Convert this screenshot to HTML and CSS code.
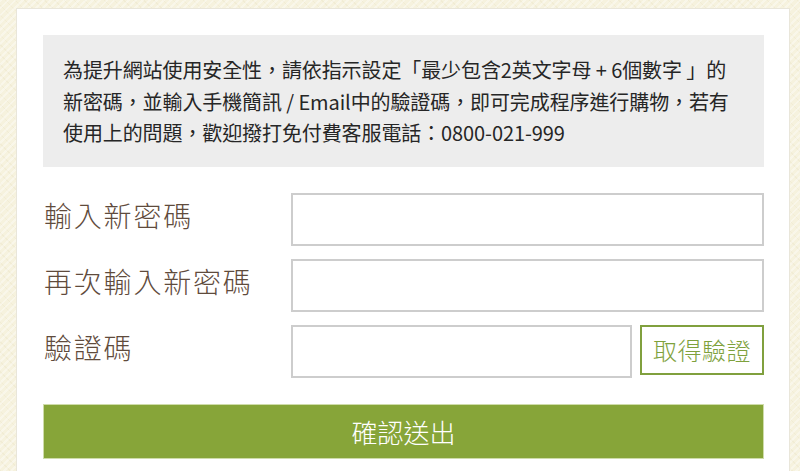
FILE: index.html
```html
<!DOCTYPE html>
<html lang="zh-TW">
<head>
<meta charset="utf-8">
<link rel="stylesheet" href="styles.css">
</head>
<body>
<div class="panel">
  <div class="notice">為提升網站使用安全性，請依指示設定「最少包含2英文字母 + 6個數字 」的新密碼，並輸入手機簡訊 / Email中的驗證碼，即可完成程序進行購物，若有使用上的問題，歡迎撥打免付費客服電話：0800-021-999</div>
  <form class="form">
    <div class="row">
      <label class="label">輸入新密碼</label>
      <input class="field" type="password">
    </div>
    <div class="row">
      <label class="label">再次輸入新密碼</label>
      <input class="field" type="password">
    </div>
    <div class="row">
      <label class="label">驗證碼</label>
      <div class="code">
        <input class="field" type="text">
        <button type="button" class="get">取得驗證</button>
      </div>
    </div>
    <button type="button" class="submit">確認送出</button>
  </form>
</div>
</body>
</html>
```
FILE: styles.css
```css
html, body {
  margin: 0;
  padding: 0;
}
body {
  width: 800px;
  height: 471px;
  overflow: hidden;
  background-color: #f6f2de;
  background-image: repeating-linear-gradient(135deg, rgba(255,255,255,0.35) 0 2px, rgba(0,0,0,0) 2px 5px),
                    repeating-linear-gradient(45deg, rgba(220,210,170,0.18) 0 1px, rgba(0,0,0,0) 1px 7px);
  font-family: "Noto Sans CJK TC", "Noto Sans", sans-serif;
}
.panel {
  box-sizing: border-box;
  width: 774px;
  margin: 8px 0 0 16px;
  height: 480px;
  background: #fff;
  border: 1px solid #e9e6da;
  padding: 26px 25px 0 26px;
}
.notice {
  background: #ededed;
  color: #262626;
  font-size: 20px;
  line-height: 31.5px;
  padding: 19px 20px 18px 20px;
  letter-spacing: -0.1px;
  font-feature-settings: "locl" 1;
}
.form {
  margin-top: 26px;
  display: flex;
  flex-direction: column;
  gap: 13px;
}
.row {
  display: grid;
  grid-template-columns: 248px 1fr;
  align-items: start;
}
.label {
  color: #5f4b3c;
  font-size: 28px;
  font-weight: 300;
  letter-spacing: 1.8px;
  line-height: 42px;
  padding-left: 1px;
  padding-top: 1px;
}
.field {
  box-sizing: border-box;
  width: 100%;
  height: 53px;
  border: 2px solid #cdcdcd;
  background: #fff;
  margin: 0;
  padding: 0 10px;
  outline: none;
}
.code {
  display: flex;
  gap: 8px;
  align-items: flex-start;
}
.code .field {
  width: 341px;
  flex: none;
}
.get {
  box-sizing: border-box;
  flex: 1;
  height: 50px;
  background: #fff;
  border: 2px solid #80a03e;
  color: #7ea13c;
  font-family: "Noto Sans CJK TC", "Noto Sans", sans-serif;
  font-size: 24px;
  font-weight: 300;
  letter-spacing: 0.5px;
  padding: 0;
  margin: 0;
}
.submit {
  margin-top: 13px;
  height: 55px;
  width: 100%;
  background: #87a539;
  border: 1px solid #cfdcaa;
  color: #fff;
  font-family: "Noto Sans CJK TC", "Noto Sans", sans-serif;
  font-size: 26px;
  font-weight: 300;
  padding: 0;
}
```
